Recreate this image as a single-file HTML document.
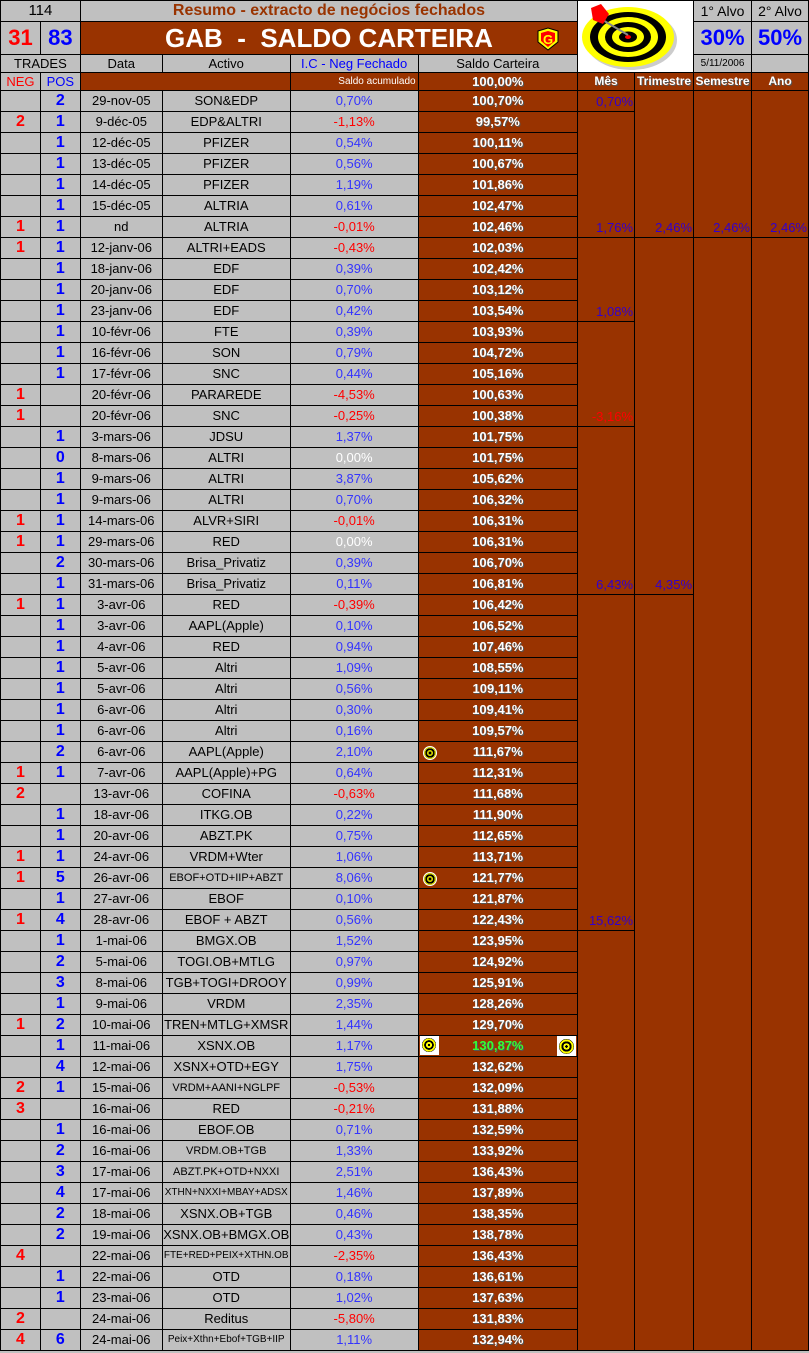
<!DOCTYPE html><html><head><meta charset="utf-8"><style>
body{margin:0;background:#c0c0c0;width:809px;height:1353px;overflow:hidden;position:relative;font-family:"Liberation Sans",Arial,sans-serif}
table{border-collapse:collapse;table-layout:fixed;position:absolute;left:0;top:0}
td{border:1px solid #000;padding:0;text-align:center;font-size:13px;white-space:nowrap;overflow:hidden;height:20px;line-height:18px;color:#000}
tr.h1 td{height:20px;line-height:18px}
tr.h2 td{height:32px;line-height:30px}
tr.h3 td{height:17px;line-height:15px}
tr.h4 td{height:17px;line-height:15px}
.n{color:#f00;font-weight:bold;font-size:16px}
.p{color:#00f;font-weight:bold;font-size:16px}
.b{color:#33f}.rd{color:#f00}.wt{color:#fff}
.s{background:#993300;color:#fff;font-weight:bold;text-shadow:1px 1px 0 #555}
.br{background:#993300}
.m{background:#993300;vertical-align:bottom;text-align:right;color:#3300cc;padding-right:1px}
.sm{font-size:11px}
</style></head><body>
<table>
<colgroup><col style="width:40px"><col style="width:40px"><col style="width:82px"><col style="width:128px"><col style="width:128px"><col style="width:160px"><col style="width:57px"><col style="width:59px"><col style="width:58px"><col style="width:57px"></colgroup>
<tr class="h1"><td colspan="2" style="font-size:15px">114</td><td colspan="4" style="color:#993300;font-weight:bold;font-size:16px">Resumo - extracto de negócios fechados</td><td colspan="2" rowspan="3" style="background:#fff;line-height:0"><svg width="114" height="70" viewBox="0 0 114 70"><ellipse cx="52" cy="38" rx="46" ry="30" fill="#999" opacity=".5"/><ellipse cx="49" cy="35" rx="46" ry="30" fill="#ff0"/><ellipse cx="49" cy="35" rx="38" ry="25" fill="#000"/><ellipse cx="49" cy="35" rx="30" ry="20" fill="#ff0"/><ellipse cx="49" cy="35" rx="23" ry="15" fill="#000"/><ellipse cx="49" cy="35" rx="16" ry="10" fill="#ff0"/><ellipse cx="49" cy="35" rx="9" ry="5.5" fill="#000"/><ellipse cx="49" cy="35" rx="3" ry="2" fill="#f00"/><line x1="22" y1="17" x2="49" y2="33" stroke="#888" stroke-width="2"/><polygon points="12,6 22,2 30,12 24,22 14,18" fill="#f00"/></svg></td><td style="font-size:14px">1° Alvo</td><td style="font-size:14px">2° Alvo</td></tr>
<tr class="h2"><td style="color:#f00;font-weight:bold;font-size:22px">31</td><td style="color:#00f;font-weight:bold;font-size:22px">83</td><td colspan="4" class="br" style="color:#fff;font-weight:bold;font-size:26px;position:relative">GAB &nbsp;-&nbsp; SALDO CARTEIRA<svg style="position:absolute;left:453px;top:5px" width="28" height="24" viewBox="0 0 28 24"><polygon points="4,4 14,1 24,4 24,15 14,23 4,15" fill="#ff0" stroke="#000"/><polygon points="7,6 14,4 21,6 21,14 14,20 7,14" fill="#f00"/><text x="14" y="17" font-size="13" font-weight="bold" fill="#ff0" text-anchor="middle" font-family="Liberation Sans">G</text></svg></td><td style="color:#00f;font-weight:bold;font-size:22px">30%</td><td style="color:#00f;font-weight:bold;font-size:22px">50%</td></tr>
<tr class="h3"><td colspan="2">TRADES</td><td>Data</td><td>Activo</td><td style="color:#00f">I.C - Neg Fechado</td><td>Saldo Carteira</td><td style="font-size:10px">5/11/2006</td><td></td></tr>
<tr class="h4"><td style="color:#f00;font-size:13px">NEG</td><td style="color:#00f;font-size:13px">POS</td><td colspan="2" class="br"></td><td class="br" style="color:#fff;font-size:10px;text-align:right;padding-right:2px">Saldo acumulado</td><td class="s">100,00%</td><td class="s" style="font-size:12px">Mês</td><td class="s" style="font-size:12px">Trimestre</td><td class="s" style="font-size:12px">Semestre</td><td class="s" style="font-size:12px">Ano</td></tr>
<tr><td></td><td class="p">2</td><td>29-nov-05</td><td>SON&amp;EDP</td><td class="b">0,70%</td><td class="s">100,70%</td><td class="m">0,70%</td><td class="m" rowspan="7">2,46%</td><td class="m" rowspan="7">2,46%</td><td class="m" rowspan="7">2,46%</td></tr>
<tr><td class="n">2</td><td class="p">1</td><td>9-déc-05</td><td>EDP&amp;ALTRI</td><td class="rd">-1,13%</td><td class="s">99,57%</td><td class="m" rowspan="6">1,76%</td></tr>
<tr><td></td><td class="p">1</td><td>12-déc-05</td><td>PFIZER</td><td class="b">0,54%</td><td class="s">100,11%</td></tr>
<tr><td></td><td class="p">1</td><td>13-déc-05</td><td>PFIZER</td><td class="b">0,56%</td><td class="s">100,67%</td></tr>
<tr><td></td><td class="p">1</td><td>14-déc-05</td><td>PFIZER</td><td class="b">1,19%</td><td class="s">101,86%</td></tr>
<tr><td></td><td class="p">1</td><td>15-déc-05</td><td>ALTRIA</td><td class="b">0,61%</td><td class="s">102,47%</td></tr>
<tr><td class="n">1</td><td class="p">1</td><td>nd</td><td>ALTRIA</td><td class="rd">-0,01%</td><td class="s">102,46%</td></tr>
<tr><td class="n">1</td><td class="p">1</td><td>12-janv-06</td><td>ALTRI+EADS</td><td class="rd">-0,43%</td><td class="s">102,03%</td><td class="m" rowspan="4">1,08%</td><td class="m" rowspan="17">4,35%</td><td class="m" rowspan="53"></td><td class="m" rowspan="53"></td></tr>
<tr><td></td><td class="p">1</td><td>18-janv-06</td><td>EDF</td><td class="b">0,39%</td><td class="s">102,42%</td></tr>
<tr><td></td><td class="p">1</td><td>20-janv-06</td><td>EDF</td><td class="b">0,70%</td><td class="s">103,12%</td></tr>
<tr><td></td><td class="p">1</td><td>23-janv-06</td><td>EDF</td><td class="b">0,42%</td><td class="s">103,54%</td></tr>
<tr><td></td><td class="p">1</td><td>10-févr-06</td><td>FTE</td><td class="b">0,39%</td><td class="s">103,93%</td><td class="m" rowspan="5" style="color:#f00">-3,16%</td></tr>
<tr><td></td><td class="p">1</td><td>16-févr-06</td><td>SON</td><td class="b">0,79%</td><td class="s">104,72%</td></tr>
<tr><td></td><td class="p">1</td><td>17-févr-06</td><td>SNC</td><td class="b">0,44%</td><td class="s">105,16%</td></tr>
<tr><td class="n">1</td><td></td><td>20-févr-06</td><td>PARAREDE</td><td class="rd">-4,53%</td><td class="s">100,63%</td></tr>
<tr><td class="n">1</td><td></td><td>20-févr-06</td><td>SNC</td><td class="rd">-0,25%</td><td class="s">100,38%</td></tr>
<tr><td></td><td class="p">1</td><td>3-mars-06</td><td>JDSU</td><td class="b">1,37%</td><td class="s">101,75%</td><td class="m" rowspan="8">6,43%</td></tr>
<tr><td></td><td class="p">0</td><td>8-mars-06</td><td>ALTRI</td><td class="wt">0,00%</td><td class="s">101,75%</td></tr>
<tr><td></td><td class="p">1</td><td>9-mars-06</td><td>ALTRI</td><td class="b">3,87%</td><td class="s">105,62%</td></tr>
<tr><td></td><td class="p">1</td><td>9-mars-06</td><td>ALTRI</td><td class="b">0,70%</td><td class="s">106,32%</td></tr>
<tr><td class="n">1</td><td class="p">1</td><td>14-mars-06</td><td>ALVR+SIRI</td><td class="rd">-0,01%</td><td class="s">106,31%</td></tr>
<tr><td class="n">1</td><td class="p">1</td><td>29-mars-06</td><td>RED</td><td class="wt">0,00%</td><td class="s">106,31%</td></tr>
<tr><td></td><td class="p">2</td><td>30-mars-06</td><td>Brisa_Privatiz</td><td class="b">0,39%</td><td class="s">106,70%</td></tr>
<tr><td></td><td class="p">1</td><td>31-mars-06</td><td>Brisa_Privatiz</td><td class="b">0,11%</td><td class="s">106,81%</td></tr>
<tr><td class="n">1</td><td class="p">1</td><td>3-avr-06</td><td>RED</td><td class="rd">-0,39%</td><td class="s">106,42%</td><td class="m" rowspan="16">15,62%</td><td class="m" rowspan="36"></td></tr>
<tr><td></td><td class="p">1</td><td>3-avr-06</td><td>AAPL(Apple)</td><td class="b">0,10%</td><td class="s">106,52%</td></tr>
<tr><td></td><td class="p">1</td><td>4-avr-06</td><td>RED</td><td class="b">0,94%</td><td class="s">107,46%</td></tr>
<tr><td></td><td class="p">1</td><td>5-avr-06</td><td>Altri</td><td class="b">1,09%</td><td class="s">108,55%</td></tr>
<tr><td></td><td class="p">1</td><td>5-avr-06</td><td>Altri</td><td class="b">0,56%</td><td class="s">109,11%</td></tr>
<tr><td></td><td class="p">1</td><td>6-avr-06</td><td>Altri</td><td class="b">0,30%</td><td class="s">109,41%</td></tr>
<tr><td></td><td class="p">1</td><td>6-avr-06</td><td>Altri</td><td class="b">0,16%</td><td class="s">109,57%</td></tr>
<tr><td></td><td class="p">2</td><td>6-avr-06</td><td>AAPL(Apple)</td><td class="b">2,10%</td><td class="s" style="position:relative"><span style="position:absolute;left:4px;top:4px;width:12px;height:12px;border-radius:50%;background:radial-gradient(#000 15%,#cc0 16%,#cc0 35%,#000 36%,#000 55%,#cc0 56%);border:1px solid #fff"></span>111,67%</td></tr>
<tr><td class="n">1</td><td class="p">1</td><td>7-avr-06</td><td>AAPL(Apple)+PG</td><td class="b">0,64%</td><td class="s">112,31%</td></tr>
<tr><td class="n">2</td><td></td><td>13-avr-06</td><td>COFINA</td><td class="rd">-0,63%</td><td class="s">111,68%</td></tr>
<tr><td></td><td class="p">1</td><td>18-avr-06</td><td>ITKG.OB</td><td class="b">0,22%</td><td class="s">111,90%</td></tr>
<tr><td></td><td class="p">1</td><td>20-avr-06</td><td>ABZT.PK</td><td class="b">0,75%</td><td class="s">112,65%</td></tr>
<tr><td class="n">1</td><td class="p">1</td><td>24-avr-06</td><td>VRDM+Wter</td><td class="b">1,06%</td><td class="s">113,71%</td></tr>
<tr><td class="n">1</td><td class="p">5</td><td>26-avr-06</td><td class="sm">EBOF+OTD+IIP+ABZT</td><td class="b">8,06%</td><td class="s" style="position:relative"><span style="position:absolute;left:4px;top:4px;width:12px;height:12px;border-radius:50%;background:radial-gradient(#000 15%,#cc0 16%,#cc0 35%,#000 36%,#000 55%,#cc0 56%);border:1px solid #fff"></span>121,77%</td></tr>
<tr><td></td><td class="p">1</td><td>27-avr-06</td><td>EBOF</td><td class="b">0,10%</td><td class="s">121,87%</td></tr>
<tr><td class="n">1</td><td class="p">4</td><td>28-avr-06</td><td>EBOF + ABZT</td><td class="b">0,56%</td><td class="s">122,43%</td></tr>
<tr><td></td><td class="p">1</td><td>1-mai-06</td><td>BMGX.OB</td><td class="b">1,52%</td><td class="s">123,95%</td><td class="m" rowspan="20"></td></tr>
<tr><td></td><td class="p">2</td><td>5-mai-06</td><td>TOGI.OB+MTLG</td><td class="b">0,97%</td><td class="s">124,92%</td></tr>
<tr><td></td><td class="p">3</td><td>8-mai-06</td><td>TGB+TOGI+DROOY</td><td class="b">0,99%</td><td class="s">125,91%</td></tr>
<tr><td></td><td class="p">1</td><td>9-mai-06</td><td>VRDM</td><td class="b">2,35%</td><td class="s">128,26%</td></tr>
<tr><td class="n">1</td><td class="p">2</td><td>10-mai-06</td><td>TREN+MTLG+XMSR</td><td class="b">1,44%</td><td class="s">129,70%</td></tr>
<tr><td></td><td class="p">1</td><td>11-mai-06</td><td>XSNX.OB</td><td class="b">1,17%</td><td class="s" style="position:relative;color:#3f3"><span style="position:absolute;left:1px;top:0;width:19px;height:19px;background:#fff"><span style="position:absolute;left:2px;top:2px;width:14px;height:14px;border-radius:50%;background:radial-gradient(#000 12%,#ff0 13%,#ff0 30%,#000 31%,#000 48%,#ff0 49%,#ff0 66%,#000 67%)"></span></span>130,87%<span style="position:absolute;right:1px;top:0;width:19px;height:20px;background:#fff"><span style="position:absolute;left:2px;top:3px;width:15px;height:15px;border-radius:50%;background:radial-gradient(#000 12%,#ff0 13%,#ff0 30%,#000 31%,#000 48%,#ff0 49%,#ff0 66%,#000 67%)"></span></span></td></tr>
<tr><td></td><td class="p">4</td><td>12-mai-06</td><td>XSNX+OTD+EGY</td><td class="b">1,75%</td><td class="s">132,62%</td></tr>
<tr><td class="n">2</td><td class="p">1</td><td>15-mai-06</td><td class="sm">VRDM+AANI+NGLPF</td><td class="rd">-0,53%</td><td class="s">132,09%</td></tr>
<tr><td class="n">3</td><td></td><td>16-mai-06</td><td>RED</td><td class="rd">-0,21%</td><td class="s">131,88%</td></tr>
<tr><td></td><td class="p">1</td><td>16-mai-06</td><td>EBOF.OB</td><td class="b">0,71%</td><td class="s">132,59%</td></tr>
<tr><td></td><td class="p">2</td><td>16-mai-06</td><td class="sm">VRDM.OB+TGB</td><td class="b">1,33%</td><td class="s">133,92%</td></tr>
<tr><td></td><td class="p">3</td><td>17-mai-06</td><td class="sm">ABZT.PK+OTD+NXXI</td><td class="b">2,51%</td><td class="s">136,43%</td></tr>
<tr><td></td><td class="p">4</td><td>17-mai-06</td><td class="sm" style="font-size:10px">XTHN+NXXI+MBAY+ADSX</td><td class="b">1,46%</td><td class="s">137,89%</td></tr>
<tr><td></td><td class="p">2</td><td>18-mai-06</td><td>XSNX.OB+TGB</td><td class="b">0,46%</td><td class="s">138,35%</td></tr>
<tr><td></td><td class="p">2</td><td>19-mai-06</td><td>XSNX.OB+BMGX.OB</td><td class="b">0,43%</td><td class="s">138,78%</td></tr>
<tr><td class="n">4</td><td></td><td>22-mai-06</td><td class="sm" style="font-size:10px">FTE+RED+PEIX+XTHN.OB</td><td class="rd">-2,35%</td><td class="s">136,43%</td></tr>
<tr><td></td><td class="p">1</td><td>22-mai-06</td><td>OTD</td><td class="b">0,18%</td><td class="s">136,61%</td></tr>
<tr><td></td><td class="p">1</td><td>23-mai-06</td><td>OTD</td><td class="b">1,02%</td><td class="s">137,63%</td></tr>
<tr><td class="n">2</td><td></td><td>24-mai-06</td><td>Reditus</td><td class="rd">-5,80%</td><td class="s">131,83%</td></tr>
<tr><td class="n">4</td><td class="p">6</td><td>24-mai-06</td><td class="sm" style="font-size:10px">Peix+Xthn+Ebof+TGB+IIP</td><td class="b">1,11%</td><td class="s">132,94%</td></tr>
</table>
</body></html>
